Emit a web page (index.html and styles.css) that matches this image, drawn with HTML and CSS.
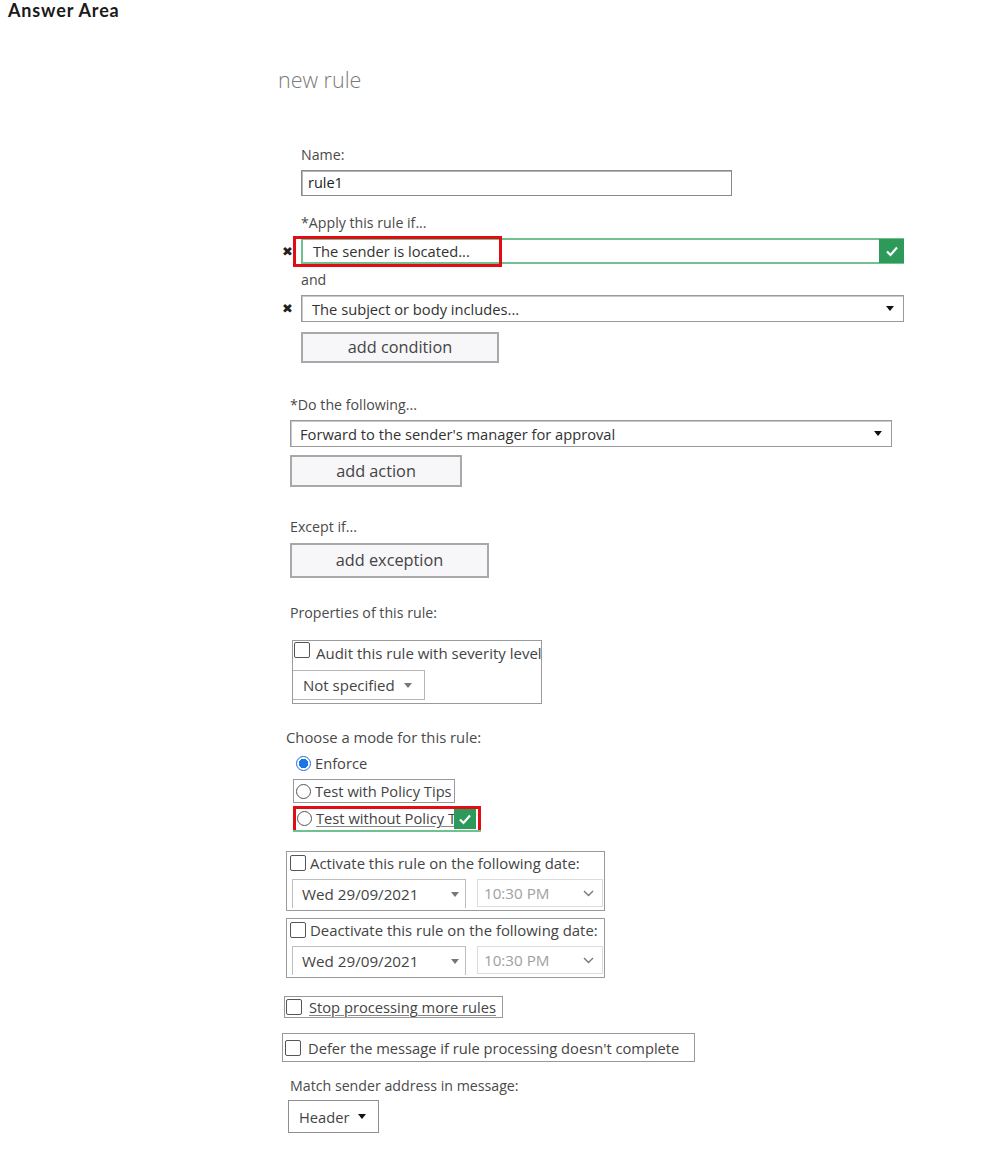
FILE: index.html
```html
<!DOCTYPE html>
<html>
<head>
<meta charset="utf-8">
<link rel="stylesheet" href="styles.css">
</head>
<body>
<div class="answer">Answer Area</div>
<div class="form">
  <div class="title">new rule</div>

  <div class="grp g1">
    <div class="lbl l-name">Name:</div>
    <div class="input name-input">rule1</div>

    <div class="lbl l-apply">*Apply this rule if...</div>
    <div class="row cond-row">
      <span class="xmark">&#x2716;</span>
      <div class="select green hl-wrap">
        <span class="val">The sender is located...</span>
        <span class="okbox"><svg width="14" height="12" viewBox="0 0 14 12"><polyline points="2,6.5 5.5,10 12,2.5" fill="none" stroke="#fff" stroke-width="2.2"/></svg></span>
        <span class="redbox rb1"></span>
      </div>
    </div>

    <div class="lbl l-and">and</div>
    <div class="row cond-row2">
      <span class="xmark">&#x2716;</span>
      <div class="select plain">
        <span class="val">The subject or body includes...</span>
        <span class="tri"></span>
      </div>
    </div>

    <div class="btn b-cond">add condition</div>
  </div>

  <div class="grp g2">
    <div class="lbl l-do">*Do the following...</div>
    <div class="select plain do-sel">
      <span class="val">Forward to the sender's manager for approval</span>
      <span class="tri"></span>
    </div>
    <div class="btn b-action">add action</div>

    <div class="lbl l-except">Except if...</div>
    <div class="btn b-exc">add exception</div>

    <div class="lbl l-props">Properties of this rule:</div>
    <div class="propbox">
      <div class="chkline"><span class="chk"></span><span>Audit this rule with severity level</span></div>
      <div class="mini-sel">Not specified <span class="tri gray"></span></div>
    </div>
  </div>

  <div class="grp g3">
    <div class="lbl l-mode">Choose a mode for this rule:</div>
    <div class="radio-row r-enf"><span class="radio on"></span><span>Enforce</span></div>
    <div class="radio-row r-tips boxed"><span class="radio"></span><span>Test with Policy Tips</span></div>
    <div class="radio-row r-without hl-wrap">
      <span class="radio"></span><span class="u">Test without Policy T</span>
      <span class="okbox small"><svg width="14" height="12" viewBox="0 0 14 12"><polyline points="2,6.5 5.5,10 12,2.5" fill="none" stroke="#fff" stroke-width="2.2"/></svg></span>
      <span class="redbox rb2"></span>
    </div>

    <div class="datebox db1">
      <div class="chkline"><span class="chk"></span><span>Activate this rule on the following date:</span></div>
      <div class="date-row">
        <div class="date-sel">Wed 29/09/2021 <span class="tri gray"></span></div>
        <div class="time-sel">10:30 PM <svg width="11" height="7" viewBox="0 0 11 7"><polyline points="1,1 5.5,5.5 10,1" fill="none" stroke="#777" stroke-width="1.4"/></svg></div>
      </div>
    </div>
    <div class="datebox db2">
      <div class="chkline"><span class="chk"></span><span>Deactivate this rule on the following date:</span></div>
      <div class="date-row">
        <div class="date-sel">Wed 29/09/2021 <span class="tri gray"></span></div>
        <div class="time-sel">10:30 PM <svg width="11" height="7" viewBox="0 0 11 7"><polyline points="1,1 5.5,5.5 10,1" fill="none" stroke="#777" stroke-width="1.4"/></svg></div>
      </div>
    </div>

    <div class="optbox stop"><span class="chk"></span><span class="u">Stop processing more rules</span></div>
    <div class="optbox defer"><span class="chk"></span><span>Defer the message if rule processing doesn't complete</span></div>

    <div class="lbl l-match">Match sender address in message:</div>
    <div class="hdr-sel">Header <span class="tri"></span></div>
  </div>
</div>
</body>
</html>
```

FILE: styles.css
```css
html, body { margin: 0; padding: 0; background: #fff; }
body {
  font-family: "Open Sans", "Noto Sans", sans-serif;
  color: #3c3c3c;
  width: 982px;
  height: 1152px;
  overflow: hidden;
}
.answer {
  font-family: Lato, "Open Sans", sans-serif;
  font-weight: 700;
  font-size: 18px;
  letter-spacing: 0.85px;
  line-height: 20px;
  color: #1a1a1a;
  margin: 0 0 0 8px;
}
.form {
  margin-left: 278px;
  display: flex;
  flex-direction: column;
}
.title {
  margin-top: 48px;
  font-size: 21.5px;
  line-height: 24px;
  font-weight: 300;
  color: #7a7a7a;
}
.grp { display: flex; flex-direction: column; align-items: flex-start; }
.lbl {
  font-size: 14.2px;
  line-height: 18px;
  color: #4a4a4a;
}
.g1 { margin-left: 23px; }
.l-name { margin-top: 54px; }
.input {
  margin-top: 6px;
  box-sizing: border-box;
  width: 431px;
  height: 26px;
  border: 1px solid #8a8a8a;
  box-shadow: inset 1px 1px 0 #b5b5b5;
  font-size: 14.5px;
  line-height: 24px;
  padding-left: 6px;
  color: #222;
}
.l-apply { margin-top: 18px; }
.row { position: relative; display: flex; align-items: center; }
.xmark {
  position: absolute;
  left: -19px;
  font-size: 12.5px;
  color: #222;
}
.cond-row { margin-top: 6px; }
.select {
  box-sizing: border-box;
  width: 603px;
  display: flex;
  align-items: center;
  justify-content: space-between;
  font-size: 14.7px;
  color: #333;
  white-space: nowrap;
}
.select .val { padding-left: 10px; }
.select.green {
  height: 26px;
  border: 2px solid #6fc18d;
  position: relative;
}
.okbox {
  width: 25px;
  height: 24px;
  margin-right: -2px;
  background: #2d9a5a;
  display: flex;
  align-items: center;
  justify-content: center;
}
.hl-wrap { position: relative; }
.redbox {
  position: absolute;
  border: 3px solid #e00d14;
  box-sizing: border-box;
  pointer-events: none;
}
.rb1 { left: -10px; top: -4px; width: 209px; height: 31px; }
.l-and { margin-top: 7px; }
.cond-row2 { margin-top: 6px; }
.select.plain {
  height: 27px;
  border: 1px solid #9a9a9a;
  box-shadow: inset 1px 1px 0 #c8c8c8;
}
.tri {
  width: 0; height: 0;
  border-left: 4px solid transparent;
  border-right: 4px solid transparent;
  border-top: 5px solid #111;
  margin-right: 9px;
  display: inline-block;
}
.tri.gray { border-top-color: #777; }
.btn {
  box-sizing: border-box;
  border: 2px solid #a9a9a9;
  background: #f7f6f8;
  font-size: 16.3px;
  color: #444;
  text-align: center;
}
.b-cond { margin-top: 10px; width: 198px; height: 31px; line-height: 27px; }

.g2 { margin-left: 12px; }
.l-do { margin-top: 33px; }
.do-sel { margin-top: 6px; width: 602px; }
.do-sel .val { padding-left: 9px; }
.b-action { margin-top: 8px; width: 172px; height: 32px; line-height: 28px; }
.l-except { margin-top: 31px; }
.b-exc { margin-top: 7px; width: 199px; height: 35px; line-height: 31px; }
.l-props { margin-top: 26px; }
.propbox {
  margin-top: 18px;
  margin-left: 2px;
  box-sizing: border-box;
  width: 250px;
  height: 64px;
  border: 1px solid #9a9a9a;
  display: flex;
  flex-direction: column;
  align-items: flex-start;
  overflow: hidden;
}
.chkline {
  display: flex;
  align-items: center;
  font-size: 15px;
  color: #444;
  white-space: nowrap;
}
.chk {
  display: inline-block;
  box-sizing: border-box;
  width: 16px;
  height: 16px;
  border: 1px solid #555;
  border-radius: 2px;
  background: #fff;
  flex: none;
}
.propbox .chkline { margin-top: 1px; margin-left: 1px; gap: 6px; height: 22px; align-items: flex-start; }
.propbox .chkline span:last-child { line-height: 28px; margin-top: -3px; }
.mini-sel {
  margin-top: 6px;
  box-sizing: border-box;
  width: 132px;
  height: 30px;
  border: 1px solid #b5b5b5;
  border-left: none;
  font-size: 15px;
  line-height: 28px;
  padding-left: 10px;
  display: flex;
  align-items: center;
  gap: 9px;
  color: #444;
  white-space: nowrap;
}

.g3 { margin-left: 8px; }
.l-mode { margin-top: 24px; font-size: 14.8px; }
.radio-row {
  display: flex;
  align-items: center;
  gap: 4px;
  font-size: 14.7px;
  color: #444;
  box-sizing: border-box;
  white-space: nowrap;
}
.radio {
  box-sizing: border-box;
  width: 15px;
  height: 15px;
  border-radius: 50%;
  border: 1px solid #555;
  background: #fff;
  flex: none;
}
.radio.on {
  border: 1px solid #1a6fd6;
  background: radial-gradient(circle, #1877e6 0 4.5px, #fff 5px);
}
.r-enf { margin-top: 8px; margin-left: 10px; height: 18px; }
.r-tips {
  margin-top: 7px;
  margin-left: 7px;
  height: 24px;
  width: 162px;
  border: 1px solid #999;
  padding-left: 2px;
}
.r-without {
  margin-top: 3px;
  margin-left: 7px;
  height: 26px;
  width: 188px;
  padding-left: 4px;
  border-bottom: 2px solid #6fc18d;
  box-shadow: inset 0 1px 0 #cde9d6;
  overflow: hidden;
}
.u { text-decoration: underline; text-decoration-color: #888; text-underline-offset: 2px; }
.okbox.small {
  position: absolute;
  right: 7px;
  top: 3px;
  width: 22px;
  height: 20px;
}
.rb2 { left: 0; top: 0; width: 188px; height: 27px; }

.datebox {
  box-sizing: border-box;
  width: 319px;
  height: 60px;
  border: 1px solid #9a9a9a;
  display: flex;
  flex-direction: column;
  overflow: hidden;
}
.db1 { margin-top: 19px; }
.db2 { margin-top: 7px; }
.datebox .chkline { margin: 1px 0 0 3px; gap: 4px; height: 20px; font-size: 14.9px; }
.date-row { display: flex; gap: 11px; margin: 6px 0 0 5px; }
.date-sel {
  box-sizing: border-box;
  width: 174px;
  height: 29px;
  border: 1px solid #bdbdbd;
  border-bottom: none;
  font-size: 15.2px;
  line-height: 28px;
  padding-left: 9px;
  display: flex;
  align-items: center;
  justify-content: space-between;
  color: #444;
  white-space: nowrap;
}
.date-sel .tri { margin-right: 6px; }
.time-sel {
  box-sizing: border-box;
  width: 126px;
  height: 28px;
  border: 1px solid #dcdcdc;
  font-size: 15.2px;
  padding-left: 6px;
  padding-right: 8px;
  display: flex;
  align-items: center;
  justify-content: space-between;
  color: #a0a0a0;
  white-space: nowrap;
}
.optbox {
  display: flex;
  align-items: center;
  gap: 7px;
  box-sizing: border-box;
  border: 1px solid #999;
  font-size: 14.7px;
  color: #444;
  white-space: nowrap;
  overflow: hidden;
}
.stop { margin-top: 18px; margin-left: -2px; height: 22px; width: 219px; padding-left: 1px; }
.defer { margin-top: 15px; margin-left: -4px; height: 29px; width: 413px; padding-left: 2px; }
.l-match { margin-top: 15px; margin-left: 4px; }
.hdr-sel {
  margin-top: 5px;
  margin-left: 2px;
  box-sizing: border-box;
  width: 91px;
  height: 33px;
  border: 1px solid #8f8f8f;
  font-size: 14.7px;
  display: flex;
  align-items: center;
  padding-left: 10px;
  gap: 9px;
  color: #444;
}
.hdr-sel .tri { margin-right: 0; }
```
